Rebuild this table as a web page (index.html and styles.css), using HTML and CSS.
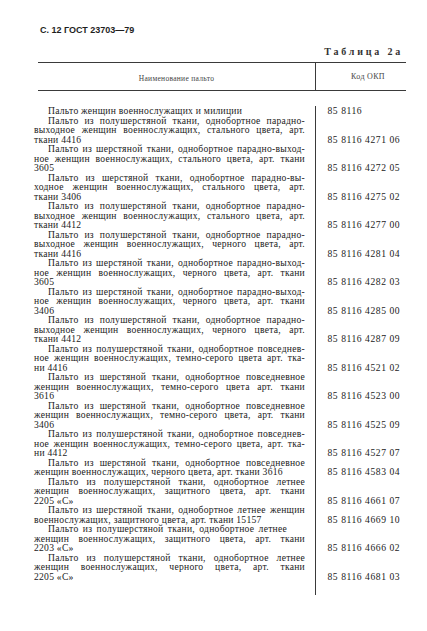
FILE: index.html
```html
<!DOCTYPE html>
<html lang="ru">
<head>
<meta charset="utf-8">
<title>ГОСТ 23703—79, Таблица 2а</title>
<link rel="stylesheet" href="styles.css">
</head>
<body>
<div class="page">
  <div class="running">С. 12 ГОСТ 23703—79</div>
  <div class="caption">Таблица 2а</div>
  <div class="thead">
    <div class="th th-name">Наименование пальто</div>
    <div class="th th-code">Код ОКП</div>
  </div>
  <div class="tbody">
    <div class="name"><div class="l i">Пальто женщин военнослужащих и милиции</div></div>
    <div class="code">85 8116</div>

    <div class="name"><div class="l j i">Пальто из полушерстяной ткани, однобортное парадно-</div><div class="l j">выходное женщин военнослужащих, стального цвета, арт.</div><div class="l">ткани 4416</div></div>
    <div class="code">85 8116 4271 06</div>

    <div class="name"><div class="l j i">Пальто из шерстяной ткани, однобортное парадно-выход-</div><div class="l j">ное женщин военнослужащих, стального цвета, арт. ткани</div><div class="l">3605</div></div>
    <div class="code">85 8116 4272 05</div>

    <div class="name"><div class="l j i">Пальто из шерстяной ткани, однобортное парадно-вы-</div><div class="l j">ходное женщин военнослужащих, стального цвета, арт.</div><div class="l">ткани 3406</div></div>
    <div class="code">85 8116 4275 02</div>

    <div class="name"><div class="l j i">Пальто из полушерстяной ткани, однобортное парадно-</div><div class="l j">выходное женщин военнослужащих, стального цвета, арт.</div><div class="l">ткани 4412</div></div>
    <div class="code">85 8116 4277 00</div>

    <div class="name"><div class="l j i">Пальто из полушерстяной ткани, однобортное парадно-</div><div class="l j">выходное женщин военнослужащих, черного цвета, арт.</div><div class="l">ткани 4416</div></div>
    <div class="code">85 8116 4281 04</div>

    <div class="name"><div class="l j i">Пальто из шерстяной ткани, однобортное парадно-выход-</div><div class="l j">ное женщин военнослужащих, черного цвета, арт. ткани</div><div class="l">3605</div></div>
    <div class="code">85 8116 4282 03</div>

    <div class="name"><div class="l j i">Пальто из шерстяной ткани, однобортное парадно-выход-</div><div class="l j">ное женщин военнослужащих, черного цвета, арт. ткани</div><div class="l">3406</div></div>
    <div class="code">85 8116 4285 00</div>

    <div class="name"><div class="l j i">Пальто из полушерстяной ткани, однобортное парадно-</div><div class="l j">выходное женщин военнослужащих, черного цвета, арт.</div><div class="l">ткани 4412</div></div>
    <div class="code">85 8116 4287 09</div>

    <div class="name"><div class="l j i">Пальто из полушерстяной ткани, однобортное повседнев-</div><div class="l j">ное женщин военнослужащих, темно-серого цвета арт. тка-</div><div class="l">ни 4416</div></div>
    <div class="code">85 8116 4521 02</div>

    <div class="name"><div class="l j i">Пальто из шерстяной ткани, однобортное повседневное</div><div class="l j">женщин военнослужащих, темно-серого цвета арт. ткани</div><div class="l">3616</div></div>
    <div class="code">85 8116 4523 00</div>

    <div class="name"><div class="l j i">Пальто из шерстяной ткани, однобортное повседневное</div><div class="l j">женщин военнослужащих, темно-серого цвета, арт. ткани</div><div class="l">3406</div></div>
    <div class="code">85 8116 4525 09</div>

    <div class="name"><div class="l j i">Пальто из полушерстяной ткани, однобортное повседнев-</div><div class="l j">ное женщин военнослужащих, темно-серого цвета, арт. тка-</div><div class="l">ни 4412</div></div>
    <div class="code">85 8116 4527 07</div>

    <div class="name"><div class="l j i">Пальто из шерстяной ткани, однобортное повседневное</div><div class="l">женщин военнослужащих, черного цвета, арт. ткани 3616</div></div>
    <div class="code">85 8116 4583 04</div>

    <div class="name"><div class="l j i">Пальто из полушерстяной ткани, однобортное летнее</div><div class="l j">женщин военнослужащих, защитного цвета, арт. ткани</div><div class="l">2205 «С»</div></div>
    <div class="code">85 8116 4661 07</div>

    <div class="name"><div class="l j i">Пальто из шерстяной ткани, однобортное летнее женщин</div><div class="l">военнослужащих, защитного цвета, арт. ткани 15157</div></div>
    <div class="code">85 8116 4669 10</div>

    <div class="name"><div class="l j i short">Пальто из полушерстяной ткани, однобортное летнее</div><div class="l j">женщин военнослужащих, защитного цвета, арт. ткани</div><div class="l">2203 «С»</div></div>
    <div class="code">85 8116 4666 02</div>

    <div class="name"><div class="l j i">Пальто из полушерстяной ткани, однобортное летнее</div><div class="l j">женщин военнослужащих, черного цвета, арт. ткани</div><div class="l">2205 «С»</div></div>
    <div class="code">85 8116 4681 03</div>

    <div class="tail"></div>
    <div class="tail code"></div>
  </div>
</div>
</body>
</html>
```
FILE: styles.css
```css
html, body {
  margin: 0;
  padding: 0;
  background: #ffffff;
}

body {
  width: 427px;
  height: 631px;
  overflow: hidden;
  color: #222222;
  font-family: "Liberation Serif", "DejaVu Serif", serif;
}

.page {
  margin-left: 34px;
  width: 372px;
}

.running {
  margin: 25px 0 0 6px;
  font-family: "Liberation Sans", "DejaVu Sans", sans-serif;
  font-weight: bold;
  font-size: 9px;
  line-height: 10px;
  color: #1e1e1e;
}

.caption {
  margin-top: 12px;
  text-align: right;
  padding-right: 3px;
  font-size: 10px;
  line-height: 10px;
  letter-spacing: 2.8px;
  font-weight: bold;
  color: #333333;
}

.thead {
  margin: 5px 0 0 4px;
  width: 368px;
  height: 27px;
  display: grid;
  grid-template-columns: 277px 91px;
  border-top: 1.5px solid #3a3a3a;
  border-bottom: 1.5px solid #3a3a3a;
}

.th {
  display: flex;
  align-items: center;
  justify-content: center;
  font-size: 7.5px;
  letter-spacing: 0.3px;
  color: #444444;
}

.th-name {
  padding-top: 3px;
}

.th-code {
  border-left: 1.5px solid #3a3a3a;
  font-size: 8px;
  padding-left: 14px;
}

.tbody {
  display: grid;
  grid-template-columns: 281px 91px;
  padding-top: 15px;
}

.name {
  padding-right: 10px;
}

.l {
  height: 9.5px;
  line-height: 9.5px;
  font-size: 9.6px;
  letter-spacing: 0.25px;
  white-space: nowrap;
}

.j {
  text-align: justify;
  text-align-last: justify;
}

.i {
  padding-left: 14px;
}

.short {
  padding-right: 18px;
}

.code {
  border-left: 1.5px solid #3a3a3a;
  padding-left: 11.5px;
  display: flex;
  align-items: flex-end;
  font-size: 9.6px;
  line-height: 9.5px;
  letter-spacing: 0.55px;
  white-space: nowrap;
}

.tail {
  height: 14px;
}
```
